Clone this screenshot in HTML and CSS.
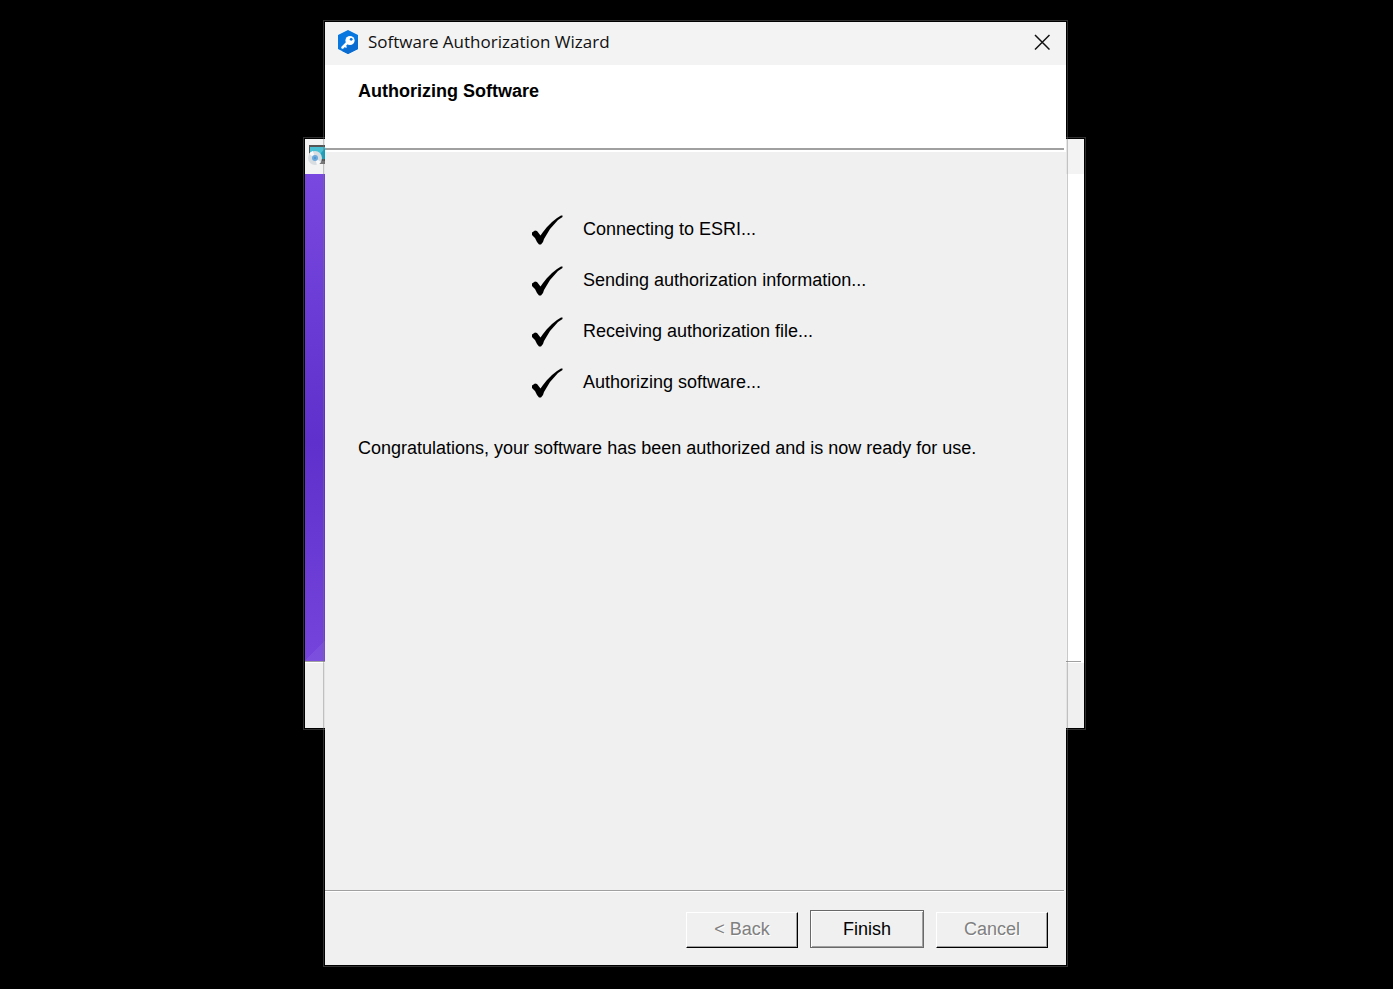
FILE: index.html
```html
<!DOCTYPE html>
<html lang="en">
<head>
    <meta charset="UTF-8">
    <meta name="viewport" content="width=device-width, initial-scale=1">
    <title>Software Authorization Wizard</title>
    <link rel="stylesheet" href="styles.css">
</head>
<body>
    <!-- Check mark shared by all steps -->
    <svg class="sprite" aria-hidden="true">
        <symbol id="check" viewBox="0 0 32 30">
            <path d="M1 17.5 L4 15.5 L6 16 L9.5 20.5 L12 17 L16 12 L21 7 L26 3 L30 0.5 L31.5 0.5 L31.5 2 L27 5 L23 9.5 L19 14 L16 19 L13 24 L12 27 L10 29.5 L8 29.5 L6 27 L4 23 L1 20 Z" />
        </symbol>
    </svg>

    <!-- Installer window behind the wizard -->
    <div class="window installer">
        <div class="installer-title">
            <svg class="installer-icon" viewBox="0 0 24 22" aria-hidden="true">
                <rect x="1" y="0" width="23" height="16" fill="#555" />
                <rect x="2" y="2" width="22" height="12" fill="#14a5c4" />
                <path d="M2 2 H18 L8 14 H2 Z" fill="#49bfd4" />
                <rect x="8" y="16" width="16" height="3" fill="#777" />
                <circle cx="7" cy="13" r="7" fill="#d8dde2" />
                <path d="M7 13 L1 9 A7 7 0 0 1 5 6 Z M7 13 L13 17 A7 7 0 0 1 9 20 Z" fill="#f7f9fa" />
                <circle cx="7" cy="13" r="3" fill="#6aa9dc" />
                <circle cx="7" cy="13" r="1" fill="#4a90d0" />
            </svg>
        </div>
        <div class="installer-body">
            <div class="installer-banner"></div>
        </div>
        <div class="installer-footer"></div>
    </div>

    <!-- Wizard -->
    <main class="window wizard">
        <header class="titlebar">
            <svg class="app-icon" viewBox="0 0 20 24" aria-hidden="true">
                <path d="M10 0 L20 5 V19 L10 24 L0 19 V5 Z" fill="#0878e0" />
                <path d="M20 9 V19 L10 24 L4 21 Z" fill="#0a6cd0" />
                <path d="M10 12 L4.5 17.5" stroke="#fff" stroke-width="2.5" stroke-linecap="round" />
                <path d="M6.5 15.5 L8.5 17.5" stroke="#fff" stroke-width="1.5" />
                <circle cx="12" cy="10.5" r="4.6" fill="#fff" />
                <circle cx="13.2" cy="9.3" r="1.4" fill="#0878e0" />
            </svg>
            <span class="title">Software Authorization Wizard</span>
            <button class="close" type="button" aria-label="Close">
                <svg viewBox="0 0 16 16" aria-hidden="true">
                    <path d="M1 1 L15.5 15.5 M15.5 1 L1 15.5" />
                </svg>
            </button>
        </header>

        <div class="heading">
            <h1>Authorizing Software</h1>
        </div>

        <div class="content">
            <ul class="steps">
                <li><svg class="check" aria-hidden="true"><use href="#check" /></svg><span>Connecting to ESRI...</span></li>
                <li><svg class="check" aria-hidden="true"><use href="#check" /></svg><span>Sending authorization information...</span></li>
                <li><svg class="check" aria-hidden="true"><use href="#check" /></svg><span>Receiving authorization file...</span></li>
                <li><svg class="check" aria-hidden="true"><use href="#check" /></svg><span>Authorizing software...</span></li>
            </ul>
            <p class="message">Congratulations, your software has been authorized and is now ready for use.</p>
        </div>

        <footer class="buttons">
            <button class="btn" type="button" disabled>&lt; Back</button>
            <button class="btn btn-default" type="button">Finish</button>
            <button class="btn" type="button" disabled>Cancel</button>
        </footer>
    </main>
</body>
</html>
```
FILE: styles.css
```css
* {
    box-sizing: border-box;
}

body {
    margin: 0;
    min-height: 100vh;
    position: relative;
    background: #000;
    color: #000;
    font-family: Arial, "Liberation Sans", sans-serif;
    font-size: 18px;
    line-height: 20px;
}

.sprite {
    position: absolute;
    width: 0;
    height: 0;
}

/* Windows on the desktop */
.window {
    position: absolute;
    display: flex;
    flex-direction: column;
    background: #f0f0f0;
    outline: 1px solid rgba(120, 120, 120, 0.4);
    outline-offset: 1px;
}

.installer {
    top: 139px;
    left: 305px;
    width: 779px;
    height: 589px;
}

.wizard {
    top: 22px;
    bottom: 24px;
    left: 325px;
    width: 741px;
    box-shadow: 0 0 0 1px rgba(0, 0, 0, 0.05);
}

/* Installer */
.installer-title {
    height: 35px;
    padding: 6px 3px;
    background: #f3f3f3;
}

.installer-icon {
    display: block;
    width: 24px;
    height: 22px;
}

.installer-body {
    flex: 1;
    margin-right: 3px;
    border-bottom: 1px solid #a0a0a0;
    background: #fff;
    box-shadow: 3px 0 #fff;
}

.installer-banner {
    width: 240px;
    height: 100%;
    background:
        linear-gradient(135deg, transparent 50%, rgba(255, 255, 255, 0.06) 50%) 0 100% / 40px 40px no-repeat,
        linear-gradient(#7848e0, #6030cc 55%, #7444dc);
}

.installer-footer {
    height: 66px;
    border-top: 1px solid #fff;
}

/* Title bar */
.titlebar {
    display: flex;
    align-items: center;
    height: 43px;
    padding: 0 16px 3px 13px;
    background: #f3f3f3;
}

.app-icon {
    width: 20px;
    height: 24px;
    margin-right: 10px;
}

.title {
    flex: 1;
    font-family: "Segoe UI", "Open Sans", sans-serif;
    font-size: 17px;
    color: #111;
}

.close {
    display: flex;
    padding: 0;
    border: 0;
    background: none;
}

.close svg {
    width: 16px;
    height: 16px;
    fill: none;
    stroke: #111;
    stroke-width: 1.5;
}

/* Page heading */
.heading {
    height: 87px;
    padding: 16px 33px;
    background: linear-gradient(#a0a0a0, #a0a0a0) 0 83px / calc(100% - 2px) 2px no-repeat #fff;
}

.heading h1 {
    margin: 0;
    font-size: 18px;
    line-height: 20px;
}

/* Steps */
.content {
    flex: 1;
    padding: 63px 33px 0;
}

.steps {
    display: grid;
    gap: 21px;
    margin: 0;
    padding: 0 0 0 173px;
    list-style: none;
}

.steps li {
    display: flex;
    align-items: flex-start;
    gap: 20px;
}

.steps span {
    padding-top: 4px;
}

.check {
    width: 32px;
    height: 30px;
}

.message {
    margin: 40px 0 0;
}

/* Buttons */
.buttons {
    display: flex;
    justify-content: flex-end;
    align-items: flex-end;
    gap: 12px;
    height: 75px;
    padding: 0 18px 17px 0;
    background:
        linear-gradient(#a0a0a0 50%, #fff 50%) 0 0 / calc(100% - 2px) 2px no-repeat;
}

.btn {
    width: 112px;
    height: 36px;
    padding: 0 0 2px;
    border: 1px solid;
    border-color: #fff #000 #000 #fff;
    background: #f0f0f0;
    box-shadow: inset -1px -1px #a0a0a0;
    font: inherit;
    color: #000;
}

.btn:disabled {
    color: #808080;
    text-shadow: 1px 1px #fff;
}

.btn-default {
    width: 114px;
    height: 38px;
    padding: 0;
    border-color: #696969;
    box-shadow: inset 1px 1px #fff, inset -1px -1px #a0a0a0;
}
```
